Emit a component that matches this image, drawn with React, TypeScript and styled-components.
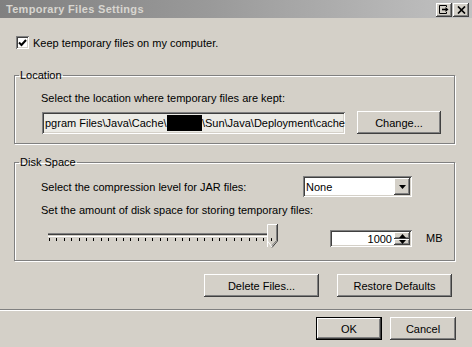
import React from "react";
import styled, { createGlobalStyle, css } from "styled-components";

const GlobalStyle = createGlobalStyle`
  html, body { margin: 0; padding: 0; background: #d4d0c8; }
  body { font-family: "Liberation Sans", Arial, sans-serif; font-size: 11px; color: #000; }
  * { box-sizing: border-box; }
`;

const Window = styled.div`
  width: 472px;
  height: 347px;
  background: #d4d0c8;
  display: flex;
  flex-direction: column;
  overflow: hidden;
`;

const TitleBar = styled.div`
  height: 18px;
  display: flex;
  align-items: center;
  padding: 0 3px 0 6px;
  background: linear-gradient(to right, #808080 0%, #9a9a9a 45%, #c2c2c2 100%);
`;

const TitleText = styled.div`
  flex: 1;
  font-weight: bold;
  font-size: 11px;
  color: #d8d6d0;
  letter-spacing: 0.3px;
`;

const TitleButtons = styled.div`
  display: flex;
  gap: 1px;
  margin-top: 1px;
`;

const raised = css`
  background: #d4d0c8;
  box-shadow: inset -1px -1px #404040, inset 1px 1px #ffffff, inset -2px -2px #808080,
    inset 2px 2px #d4d0c8;
`;

const sunken = css`
  box-shadow: inset 1px 1px #808080, inset -1px -1px #ffffff, inset 2px 2px #404040,
    inset -2px -2px #d4d0c8;
`;

const CaptionButton = styled.div`
  ${raised};
  width: 16px;
  height: 14px;
  display: flex;
  align-items: center;
  justify-content: center;
`;

const CheckRow = styled.label`
  display: flex;
  align-items: center;
  gap: 4px;
  margin: 18px 0 0 16px;
  height: 13px;
`;

const CheckBox = styled.span`
  ${sunken};
  width: 13px;
  height: 13px;
  background: #fff;
  display: flex;
  align-items: center;
  justify-content: center;
`;

const Group = styled.fieldset<{ $top: number }>`
  margin: ${(p) => p.$top}px 17px 0 14px;
  padding: 0 0 0 26px;
  border: 1px solid #808080;
  box-shadow: inset 1px 1px #ffffff, 1px 1px #ffffff;
  min-width: 0;
`;

const Legend = styled.legend`
  padding: 0 1px;
  margin-left: -22px;
  line-height: 13px;
`;

const Label = styled.div<{ $mt: number }>`
  margin-top: ${(p) => p.$mt}px;
  line-height: 13px;
  height: 13px;
  white-space: nowrap;
`;

const LocationRow = styled.div`
  display: flex;
  align-items: center;
  margin: 6px 0 9px 1px;
`;

const PathField = styled.div`
  ${sunken};
  width: 303px;
  height: 22px;
  background: #ecebe6;
  display: flex;
  align-items: center;
  padding-left: 3px;
  white-space: nowrap;
  overflow: hidden;
`;

const Redacted = styled.span`
  display: inline-block;
  width: 37px;
  height: 16px;
  background: #000;
`;

const Button = styled.div<{ $w: number; $default?: boolean }>`
  ${raised};
  width: ${(p) => p.$w}px;
  height: 23px;
  display: flex;
  align-items: center;
  justify-content: center;
  white-space: nowrap;
  ${(p) =>
    p.$default &&
    css`
      box-shadow: inset 0 0 0 1px #000, inset -2px -2px #404040, inset 2px 2px #ffffff,
        inset -3px -3px #808080;
    `}
`;

const ChangeButton = styled(Button)`
  margin-left: 12px;
`;

const ComboRow = styled.div`
  display: flex;
  align-items: center;
  justify-content: space-between;
  margin: 7px 0 0 0;
  padding-right: 42px;
`;

const Combo = styled.div`
  ${sunken};
  width: 109px;
  height: 21px;
  background: #fff;
  display: flex;
  align-items: center;
  padding: 2px;
`;

const ComboText = styled.span`
  flex: 1;
  padding-left: 1px;
`;

const ArrowButton = styled.div<{ $h: number }>`
  ${raised};
  width: 16px;
  height: ${(p) => p.$h}px;
  display: flex;
  align-items: center;
  justify-content: center;
`;

const SliderRow = styled.div`
  display: flex;
  align-items: flex-start;
  height: 30px;
  margin: 3px 0 10px 0;
`;

const Slider = styled.div`
  position: relative;
  width: 234px;
  height: 30px;
  margin-left: 5px;
`;

const Track = styled.div`
  margin: 13px 8px 0 2px;
  height: 4px;
  border-top: 1px solid #808080;
  border-bottom: 1px solid #ffffff;
  background: linear-gradient(#404040 0 1px, #d4d0c8 1px);
`;

const Ticks = styled.div`
  display: flex;
  justify-content: space-between;
  margin: 1px 8px 0 3px;
  height: 4px;
`;

const Tick = styled.span`
  width: 1px;
  height: 3px;
  background: #000;
`;

const Thumb = styled.svg`
  position: absolute;
  left: 221px;
  top: 4px;
`;

const Spinner = styled.div`
  ${sunken};
  width: 82px;
  height: 17px;
  margin: 10px 0 0 50px;
  background: #fff;
  display: flex;
  align-items: center;
  padding: 2px;
`;

const SpinValue = styled.span`
  flex: 1;
  text-align: right;
  padding-right: 2px;
`;

const SpinButtons = styled.div`
  display: flex;
  flex-direction: column;
  align-self: stretch;
`;

const Unit = styled.div`
  margin: 12px 0 0 14px;
  line-height: 13px;
`;

const ActionRow = styled.div`
  display: flex;
  justify-content: flex-end;
  gap: 18px;
  padding-right: 20px;
  margin-top: 13px;
`;

const Separator = styled.div`
  margin-top: 12px;
  height: 2px;
  border-top: 1px solid #808080;
  border-bottom: 1px solid #ffffff;
`;

const DialogRow = styled.div`
  display: flex;
  justify-content: flex-end;
  gap: 8px;
  padding-right: 16px;
  margin-top: 6px;
`;

const SmallArrow = ({ up }: { up?: boolean }) => (
  <svg width="7" height="4" viewBox="0 0 7 4">
    <path d={up ? "M3.5 0 L7 4 L0 4 Z" : "M0 0 L7 0 L3.5 4 Z"} fill="#000" />
  </svg>
);

export default function App() {
  const ticks = Array.from({ length: 31 });
  return (
    <>
      <GlobalStyle />
      <Window>
        <TitleBar>
          <TitleText>Temporary Files Settings</TitleText>
          <TitleButtons>
            <CaptionButton>
              <svg width="10" height="9" viewBox="0 0 10 9">
                <path d="M0.5 0.5 H7.5 V2 M0.5 0.5 V8.5 H7.5 V7" stroke="#000" fill="none" />
                <path d="M3 4.5 H8" stroke="#000" strokeWidth="1.6" />
                <path d="M6.5 2 L9.5 4.5 L6.5 7 Z" fill="#000" />
              </svg>
            </CaptionButton>
            <CaptionButton>
              <svg width="9" height="8" viewBox="0 0 9 8">
                <path d="M1 0.5 L8 7.5 M8 0.5 L1 7.5" stroke="#000" strokeWidth="1.7" />
              </svg>
            </CaptionButton>
          </TitleButtons>
        </TitleBar>

        <CheckRow>
          <CheckBox>
            <svg width="9" height="8" viewBox="0 0 9 8">
              <path d="M1 3.5 L3.5 6 L8 1" stroke="#000" strokeWidth="2" fill="none" />
            </svg>
          </CheckBox>
          <span>Keep temporary files on my computer.</span>
        </CheckRow>

        <Group $top={20}>
          <Legend>Location</Legend>
          <Label $mt={10}>Select the location where temporary files are kept:</Label>
          <LocationRow>
            <PathField>
              <span>pgram Files\Java\Cache\</span>
              <Redacted />
              <span>\Sun\Java\Deployment\cache</span>
            </PathField>
            <ChangeButton $w={84}>Change...</ChangeButton>
          </LocationRow>
        </Group>

        <Group $top={12}>
          <Legend>Disk Space</Legend>
          <ComboRow>
            <span>Select the compression level for JAR files:</span>
            <Combo>
              <ComboText>None</ComboText>
              <ArrowButton $h={17}>
                <SmallArrow />
              </ArrowButton>
            </Combo>
          </ComboRow>
          <Label $mt={7}>Set the amount of disk space for storing temporary files:</Label>
          <SliderRow>
            <Slider>
              <Track />
              <Ticks>
                {ticks.map((_, i) => (
                  <Tick key={i} />
                ))}
              </Ticks>
              <Thumb width="11" height="24" viewBox="0 0 11 24">
                <path d="M0.5 23 V0.5 H10" stroke="#ffffff" fill="#d4d0c8" />
                <path d="M10.5 0 V17 L5 23.5" stroke="#404040" fill="none" />
                <path d="M9.5 1 V16.5 L4.5 22" stroke="#808080" fill="none" />
                <path d="M0.5 17 L5 23" stroke="#ffffff" fill="none" />
              </Thumb>
            </Slider>
            <Spinner>
              <SpinValue>1000</SpinValue>
              <SpinButtons>
                <ArrowButton $h={7}>
                  <SmallArrow up />
                </ArrowButton>
                <ArrowButton $h={6}>
                  <SmallArrow />
                </ArrowButton>
              </SpinButtons>
            </Spinner>
            <Unit>MB</Unit>
          </SliderRow>
        </Group>

        <ActionRow>
          <Button $w={115}>Delete Files...</Button>
          <Button $w={115}>Restore Defaults</Button>
        </ActionRow>

        <Separator />

        <DialogRow>
          <Button $w={66} $default>
            OK
          </Button>
          <Button $w={66}>Cancel</Button>
        </DialogRow>
      </Window>
    </>
  );
}
